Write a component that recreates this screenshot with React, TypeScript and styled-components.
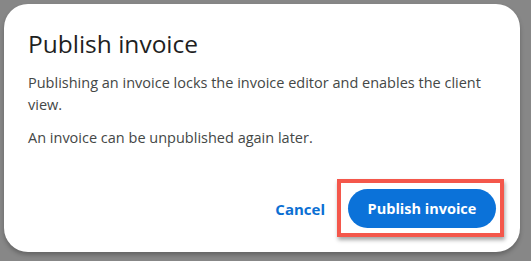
import React from 'react';
import styled, { createGlobalStyle } from 'styled-components';

const GlobalStyle = createGlobalStyle`
  html, body {
    margin: 0;
    padding: 0;
    background: #878787;
  }
  body {
    font-family: 'Open Sans', 'Noto Sans', sans-serif;
  }
`;

const Backdrop = styled.div`
  width: 531px;
  height: 261px;
  padding: 4px 11px 9px 4px;
  box-sizing: border-box;
  display: flex;
`;

const Dialog = styled.div`
  flex: 1 1 auto;
  display: flex;
  flex-direction: column;
  background: #ffffff;
  border-radius: 24px;
  padding: 24px;
  box-shadow: 0px 3px 4px rgba(0, 0, 0, 0.25);
  box-sizing: border-box;
`;

const Title = styled.h2`
  margin: 0 0 12px 0;
  font-size: 24.5px;
  line-height: 32px;
  font-weight: 400;
  color: #1f1f1f;
`;

const Text = styled.p`
  margin: 0 0 11px 0;
  font-size: 14.5px;
  line-height: 22px;
  color: #444746;
`;

const Footer = styled.div`
  margin-top: auto;
  display: flex;
  justify-content: flex-end;
  align-items: center;
  gap: 23px;
`;

const TextButton = styled.button`
  border: none;
  background: none;
  padding: 0;
  font-family: inherit;
  font-size: 15px;
  font-weight: 700;
  color: #0b6fd3;
  cursor: pointer;
`;

const Highlight = styled.div`
  position: relative;
  display: flex;
`;

const Outline = styled.span`
  position: absolute;
  top: -10px;
  left: -11px;
  right: -8px;
  bottom: -9px;
  border: 4px solid #f4574b;
  box-shadow: 1px 3px 4px rgba(0, 0, 0, 0.35);
  pointer-events: none;
`;

const PrimaryButton = styled.button`
  height: 39px;
  width: 148px;
  border: none;
  border-radius: 20px;
  background: #0b72d9;
  color: #ffffff;
  font-family: inherit;
  font-size: 14.5px;
  font-weight: 700;
  cursor: pointer;
`;

export default function App() {
  return (
    <>
      <GlobalStyle />
      <Backdrop>
        <Dialog>
          <Title>Publish invoice</Title>
          <Text>
            Publishing an invoice locks the invoice editor and enables the client view.
          </Text>
          <Text>An invoice can be unpublished again later.</Text>
          <Footer>
            <TextButton>Cancel</TextButton>
            <Highlight>
              <PrimaryButton>Publish invoice</PrimaryButton>
              <Outline />
            </Highlight>
          </Footer>
        </Dialog>
      </Backdrop>
    </>
  );
}
